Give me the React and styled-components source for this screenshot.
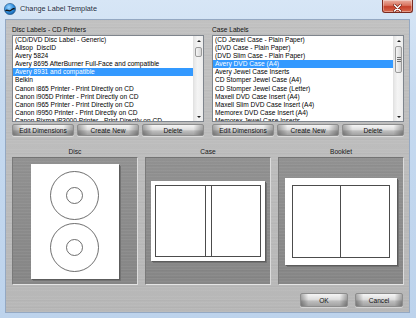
import styled, { createGlobalStyle } from "styled-components";

const GlobalStyle = createGlobalStyle`
  html, body {
    margin: 0;
    padding: 0;
  }
  body {
    width: 416px;
    height: 318px;
    overflow: hidden;
    font-family: "Liberation Sans", Arial, sans-serif;
  }
  * {
    box-sizing: border-box;
  }
`;

const discLabels = [
  "(CD/DVD Disc Label - Generic)",
  "Allsop  DiscID",
  "Avery 5824",
  "Avery 8695 AfterBurner Full-Face and compatible",
  "Avery 8931 and compatible",
  "Belkin",
  "Canon i865 Printer - Print Directly on CD",
  "Canon i905D Printer - Print Directly on CD",
  "Canon i965 Printer - Print Directly on CD",
  "Canon i9950 Printer - Print Directly on CD",
  "Canon Pixma iP3000 Printer - Print Directly on CD",
];

const caseLabels = [
  "(CD Jewel Case - Plain Paper)",
  "(DVD Case - Plain Paper)",
  "(DVD Slim Case - Plain Paper)",
  "Avery DVD Case (A4)",
  "Avery Jewel Case Inserts",
  "CD Stomper Jewel Case (A4)",
  "CD Stomper Jewel Case (Letter)",
  "Maxell DVD Case Insert (A4)",
  "Maxell Slim DVD Case Insert (A4)",
  "Memorex DVD Case Insert (A4)",
  "Memorex Jewel Case Inserts",
];

const AppIcon = () => (
  <svg width="12" height="12" viewBox="0 0 12 12">
    <defs>
      <radialGradient id="ico" cx="40%" cy="35%" r="70%">
        <stop offset="0" stopColor="#9fd6ff" />
        <stop offset="0.6" stopColor="#2f8ede" />
        <stop offset="1" stopColor="#135a9e" />
      </radialGradient>
    </defs>
    <circle cx="6" cy="6" r="5.6" fill="url(#ico)" stroke="#1c4f80" strokeWidth="0.6" />
    <path d="M1.2 7.4 C3 5.2 5 8.6 7 6.4 C8.2 5.2 9.6 4.6 10.8 5.2 L10.6 6.6 C9.4 6 8.4 6.8 7.4 7.8 C5.4 9.8 3.4 7 1.6 8.6 Z" fill="#141414" />
  </svg>
);

const CloseGlyph = () => (
  <svg width="9" height="8" viewBox="0 0 9 8">
    <path d="M1.5 1 L7.5 7 M7.5 1 L1.5 7" stroke="#6b1d12" strokeWidth="2.6" strokeLinecap="round" />
    <path d="M1.5 1 L7.5 7 M7.5 1 L1.5 7" stroke="#fff" strokeWidth="1.5" strokeLinecap="round" />
  </svg>
);

const DiscSheetArt = () => (
  <svg width="88" height="115" viewBox="0 0 88 115">
    <g fill="none" stroke="#4a4a4a" strokeWidth="0.8">
      <circle cx="43.5" cy="31.5" r="24" />
      <circle cx="43.5" cy="31.5" r="8" />
      <circle cx="43.5" cy="83.5" r="24" />
      <circle cx="43.5" cy="83.5" r="8" />
    </g>
  </svg>
);

const ListBox = ({ items, selected, thumbTop, thumbHeight, grip }) => (
  <List>
    <Items>
      {items.map((item, i) => (
        <Row key={i} $selected={i === selected}>
          {item}
        </Row>
      ))}
    </Items>
    <ScrollBar>
      <ArrowButton>
        <Arrow $up />
      </ArrowButton>
      <Track>
        <Thumb style={{ marginTop: thumbTop, height: thumbHeight }}>
          {grip && (
            <Grip>
              <span />
              <span />
              <span />
            </Grip>
          )}
        </Thumb>
      </Track>
      <ArrowButton>
        <Arrow />
      </ArrowButton>
    </ScrollBar>
  </List>
);

const ButtonBar = () => (
  <Buttons>
    <SteelButton>Edit Dimensions</SteelButton>
    <SteelButton>Create New</SteelButton>
    <SteelButton>Delete</SteelButton>
  </Buttons>
);

export default function App() {
  return (
    <>
      <GlobalStyle />
      <Window>
        <TitleBar>
          <AppIcon />
          <Title>Change Label Template</Title>
          <CloseButton>
            <CloseGlyph />
          </CloseButton>
        </TitleBar>
        <Client>
          <Lists>
            <Column>
              <FieldLabel>Disc Labels - CD Printers</FieldLabel>
              <ListBox items={discLabels} selected={4} thumbTop={2} thumbHeight={10} />
              <ButtonBar />
            </Column>
            <Column>
              <FieldLabel>Case Labels</FieldLabel>
              <ListBox items={caseLabels} selected={3} thumbTop={1} thumbHeight={27} grip />
              <ButtonBar />
            </Column>
          </Lists>
          <Previews>
            <Preview>
              <PreviewTitle>Disc</PreviewTitle>
              <PreviewPanel>
                <Sheet $w={88} $h={115} $pad={0}>
                  <DiscSheetArt />
                </Sheet>
              </PreviewPanel>
            </Preview>
            <Preview>
              <PreviewTitle>Case</PreviewTitle>
              <PreviewPanel>
                <Sheet $w={114} $h={80} $pad={4}>
                  <CaseOutline>
                    <div />
                    <Spine />
                    <div />
                  </CaseOutline>
                </Sheet>
              </PreviewPanel>
            </Preview>
            <Preview>
              <PreviewTitle>Booklet</PreviewTitle>
              <PreviewPanel>
                <Sheet $w={112} $h={87} $pad={7}>
                  <BookletOutline>
                    <Page />
                    <div />
                  </BookletOutline>
                </Sheet>
              </PreviewPanel>
            </Preview>
          </Previews>
          <Footer>
            <SteelButton $wide>OK</SteelButton>
            <SteelButton $wide>Cancel</SteelButton>
          </Footer>
        </Client>
      </Window>
    </>
  );
}

// brushed-metal look: faint horizontal streaks over a flat grey
const brushed = (base) => `
  background-color: ${base};
  background-image:
    repeating-linear-gradient(180deg, rgba(255,255,255,0.05) 0 1px, transparent 1px 3px),
    repeating-linear-gradient(180deg, rgba(0,0,0,0.025) 0 1px, transparent 1px 7px),
    linear-gradient(180deg, rgba(255,255,255,0.06), rgba(0,0,0,0.03));
`;

const Window = styled.div`
  width: 416px;
  height: 318px;
  display: flex;
  flex-direction: column;
  background: linear-gradient(180deg, #d7e6f6 0%, #c6daf0 30%, #bdd3ec 100%);
`;

const TitleBar = styled.div`
  height: 19px;
  display: flex;
  align-items: flex-start;
  padding-left: 4px;
  gap: 4px;
  svg {
    margin-top: 3px;
  }
`;

const Title = styled.div`
  font-family: "Liberation Sans", Arial, sans-serif;
  font-size: 7.3px;
  line-height: 18px;
  color: #1d2e44;
  text-shadow: 0 0 3px rgba(255, 255, 255, 0.9);
`;

const CloseButton = styled.div`
  margin-left: auto;
  margin-right: 3px;
  width: 31px;
  height: 13px;
  display: flex;
  align-items: center;
  justify-content: center;
  border: 1px solid #7a2a1f;
  border-top: none;
  border-radius: 0 0 3px 3px;
  background: linear-gradient(180deg, #eab0a2 0%, #d9735e 45%, #c5402a 55%, #d86a4f 100%);
  box-shadow: inset 0 0 0 1px rgba(255, 255, 255, 0.35);
`;

const Client = styled.div`
  flex: 1;
  margin: 0 6px 5px 5px;
  border: 1px solid #94a8c2;
  padding: 6px 5px 0 6px;
  display: flex;
  flex-direction: column;
  ${brushed("#bdbdbd")}
`;

const Lists = styled.div`
  display: grid;
  grid-template-columns: 192px 192px;
  column-gap: 8px;
`;

const Column = styled.div`
  display: flex;
  flex-direction: column;
`;

const FieldLabel = styled.div`
  height: 9px;
  font-size: 6.6px;
  line-height: 8px;
  color: #111;
`;

const List = styled.div`
  height: 87px;
  display: flex;
  background: #fff;
  border: 1px solid #7f858d;
  overflow: hidden;
`;

const Items = styled.div`
  flex: 1;
  overflow: hidden;
`;

const Row = styled.div`
  height: 8.1px;
  line-height: 8.1px;
  padding-left: 2px;
  font-size: 6.6px;
  white-space: pre;
  color: ${(p) => (p.$selected ? "#fff" : "#000")};
  background: ${(p) => (p.$selected ? "#3399ff" : "transparent")};
`;

const ScrollBar = styled.div`
  width: 10px;
  display: flex;
  flex-direction: column;
  background: linear-gradient(90deg, #e6e6e6, #f4f4f4 40%, #ececec);
  border-left: 1px solid #e2e2e2;
`;

const ArrowButton = styled.div`
  height: 9px;
  display: flex;
  align-items: center;
  justify-content: center;
`;

const Arrow = styled.div`
  width: 0;
  height: 0;
  border-left: 2px solid transparent;
  border-right: 2px solid transparent;
  ${(p) => (p.$up ? "border-bottom: 2px solid #222;" : "border-top: 2px solid #222;")}
`;

const Track = styled.div`
  flex: 1;
  padding: 0 1px;
`;

const Thumb = styled.div`
  border: 1px solid #9a9a9a;
  border-radius: 2px;
  background: linear-gradient(90deg, #f6f6f6, #e6e6e6 50%, #d6d6d6);
  display: flex;
  align-items: center;
  justify-content: center;
`;

const Grip = styled.div`
  display: flex;
  flex-direction: column;
  gap: 1px;
  span {
    display: block;
    width: 4px;
    height: 1px;
    background: #6e6e6e;
  }
`;

const Buttons = styled.div`
  margin-top: 2px;
  display: grid;
  grid-template-columns: repeat(3, 1fr);
  column-gap: 3px;
`;

const SteelButton = styled.div`
  height: ${(p) => (p.$wide ? "14px" : "12px")};
  width: ${(p) => (p.$wide ? "48px" : "auto")};
  display: flex;
  align-items: center;
  justify-content: center;
  font-size: 6.6px;
  color: #111;
  border: 1px solid #8d8d8d;
  border-radius: 2px;
  background:
    linear-gradient(90deg, rgba(0, 0, 0, 0.3), rgba(0, 0, 0, 0) 16%, rgba(0, 0, 0, 0) 84%, rgba(0, 0, 0, 0.3)),
    linear-gradient(180deg, #f6f6f6 0%, #dedede 45%, #bdbdbd 60%, #a2a2a2 100%);
  box-shadow: 0 1px 0 rgba(255, 255, 255, 0.45);
`;

const Previews = styled.div`
  margin-top: 12px;
  display: grid;
  grid-template-columns: repeat(3, 126px);
  column-gap: 7px;
`;

const Preview = styled.div`
  display: flex;
  flex-direction: column;
`;

const PreviewTitle = styled.div`
  height: 9px;
  text-align: center;
  font-size: 6.6px;
  line-height: 8px;
  color: #1a1a1a;
`;

const PreviewPanel = styled.div`
  height: 128px;
  display: flex;
  align-items: center;
  justify-content: center;
  border-top: 1px solid #737373;
  border-left: 1px solid #7a7a7a;
  border-right: 1px solid #dcdcdc;
  border-bottom: 1px solid #e4e4e4;
  ${brushed("#8a8a8a")}
`;

const Sheet = styled.div`
  width: ${(p) => p.$w}px;
  height: ${(p) => p.$h}px;
  padding: ${(p) => p.$pad}px;
  display: flex;
  background: #fff;
  box-shadow: 1px 1px 0 #5c5c5c, 2px 2px 0 #737373;
`;

const CaseOutline = styled.div`
  flex: 1;
  display: grid;
  grid-template-columns: 1fr 7px 1fr;
  border: 1px solid #4c4c4c;
`;

const Spine = styled.div`
  border-left: 1px solid #4c4c4c;
  border-right: 1px solid #4c4c4c;
`;

const BookletOutline = styled.div`
  flex: 1;
  display: grid;
  grid-template-columns: 1fr 1fr;
  border: 1px solid #4c4c4c;
`;

const Page = styled.div`
  border-right: 1px solid #4c4c4c;
`;

const Footer = styled.div`
  margin-top: 8px;
  display: flex;
  justify-content: flex-end;
  gap: 7px;
  padding-right: 1px;
`;
